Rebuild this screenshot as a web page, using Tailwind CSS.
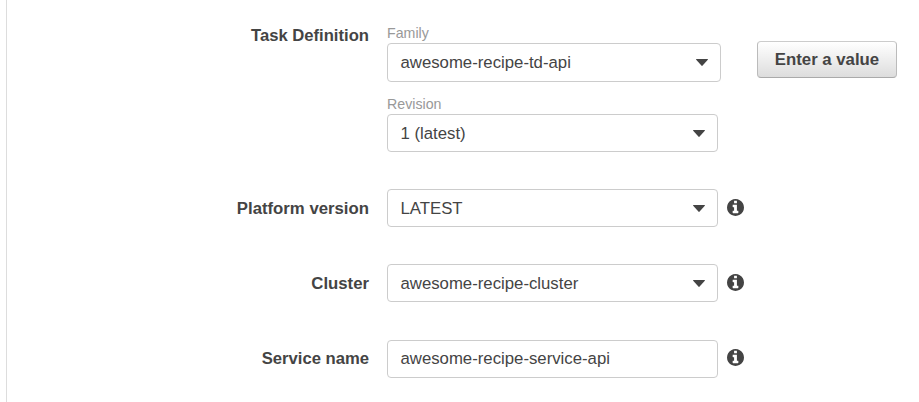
<!DOCTYPE html>
<html lang="en"><head><meta charset="utf-8"><title>Run Task</title>
<script src="https://cdn.jsdelivr.net/npm/@tailwindcss/browser@4"></script></head>
<body class="bg-white overflow-hidden font-['Liberation_Sans',Arial,sans-serif] text-[16.75px] text-[#444]">
<svg class="hidden"><symbol id="info" viewBox="0 128 1536 1536"><path fill="#444" d="M1024 1376v-160q0-14-9-23t-23-9h-96v-512q0-14-9-23t-23-9h-320q-14 0-23 9t-9 23v160q0 14 9 23t23 9h96v320h-96q-14 0-23 9t-9 23v160q0 14 9 23t23 9h448q14 0 23-9t9-23zm-128-896v-160q0-14-9-23t-23-9h-192q-14 0-23 9t-9 23v160q0 14 9 23t23 9h192q14 0 23-9t9-23zm640 416q0 209-103 385.5t-279.5 279.5-385.5 103-385.5-103-279.5-279.5-103-385.5 103-385.5 279.5-279.5 385.5-103 385.5 103 279.5 279.5 103 385.5z"/></symbol><symbol id="caret" viewBox="0 0 12 7"><path fill="#444" d="M.6 0h10.8q.9 0 .4.8L6.6 6.6q-.6.6-1.2 0L.2.8Q-.3 0 .6 0z"/></symbol></svg>
<main class="ml-[6px] h-[402px] border-l border-[#ddd] pt-[25px]">
<section class="flex h-[164px]">
<div class="w-[362px] pt-[1px] text-right text-[16.65px] font-bold leading-[20px]">Task Definition</div>
<div class="ml-[18px] w-[334px]">
<div class="h-[18px] text-[14.2px] leading-[17px] text-[#999]">Family</div>
<div class="flex h-[39px] items-center justify-between rounded-[4px] border border-[#ccc] pr-[12px] pl-[12.5px]"><span>awesome-recipe-td-api</span><svg class="h-[7px] w-[12px]"><use href="#caret"/></svg></div>
<div class="mt-[14px] h-[18px] text-[14.2px] leading-[17px] text-[#999]">Revision</div>
<div class="flex h-[38px] w-[331px] items-center justify-between rounded-[4px] border border-[#ccc] pr-[12px] pl-[12.5px]"><span class="pt-[2px]">1 (latest)</span><svg class="h-[7px] w-[12px]"><use href="#caret"/></svg></div>
</div>
<button class="mt-[16px] ml-[36px] h-[37px] w-[140px] rounded-[4px] border border-[#bbb] border-t-[#ccc] border-b-[#aaa] bg-linear-to-b from-white to-[#ddd] font-bold whitespace-nowrap">Enter a value</button>
</section>
<div class="flex h-[75px] items-start"><div class="w-[362px] pt-[1px] text-right font-bold leading-[38px]">Platform version</div><div class="ml-[18px] flex h-[38px] w-[331px] items-center justify-between rounded-[4px] border border-[#ccc] pr-[12px] pl-[12.5px]"><span class="pt-[2px]">LATEST</span><svg class="h-[7px] w-[12px]"><use href="#caret"/></svg></div><svg class="mt-[10px] ml-[9px] size-[17px]"><use href="#info"/></svg></div>
<div class="flex h-[76px] items-start"><div class="w-[362px] pt-[1px] text-right font-bold leading-[38px]">Cluster</div><div class="ml-[18px] flex h-[38px] w-[331px] items-center justify-between rounded-[4px] border border-[#ccc] pr-[12px] pl-[12.5px]"><span class="pt-[2px]">awesome-recipe-cluster</span><svg class="h-[7px] w-[12px]"><use href="#caret"/></svg></div><svg class="mt-[10px] ml-[9px] size-[17px]"><use href="#info"/></svg></div>
<div class="flex items-start"><div class="w-[362px] text-right text-[16.65px] font-bold leading-[37px]">Service name</div><div class="ml-[18px] flex h-[38px] w-[331px] items-center rounded-[4px] border border-[#ccc] pl-[12.5px]">awesome-recipe-service-api</div><svg class="mt-[9px] ml-[9px] size-[17px]"><use href="#info"/></svg></div>
</main></body></html>
